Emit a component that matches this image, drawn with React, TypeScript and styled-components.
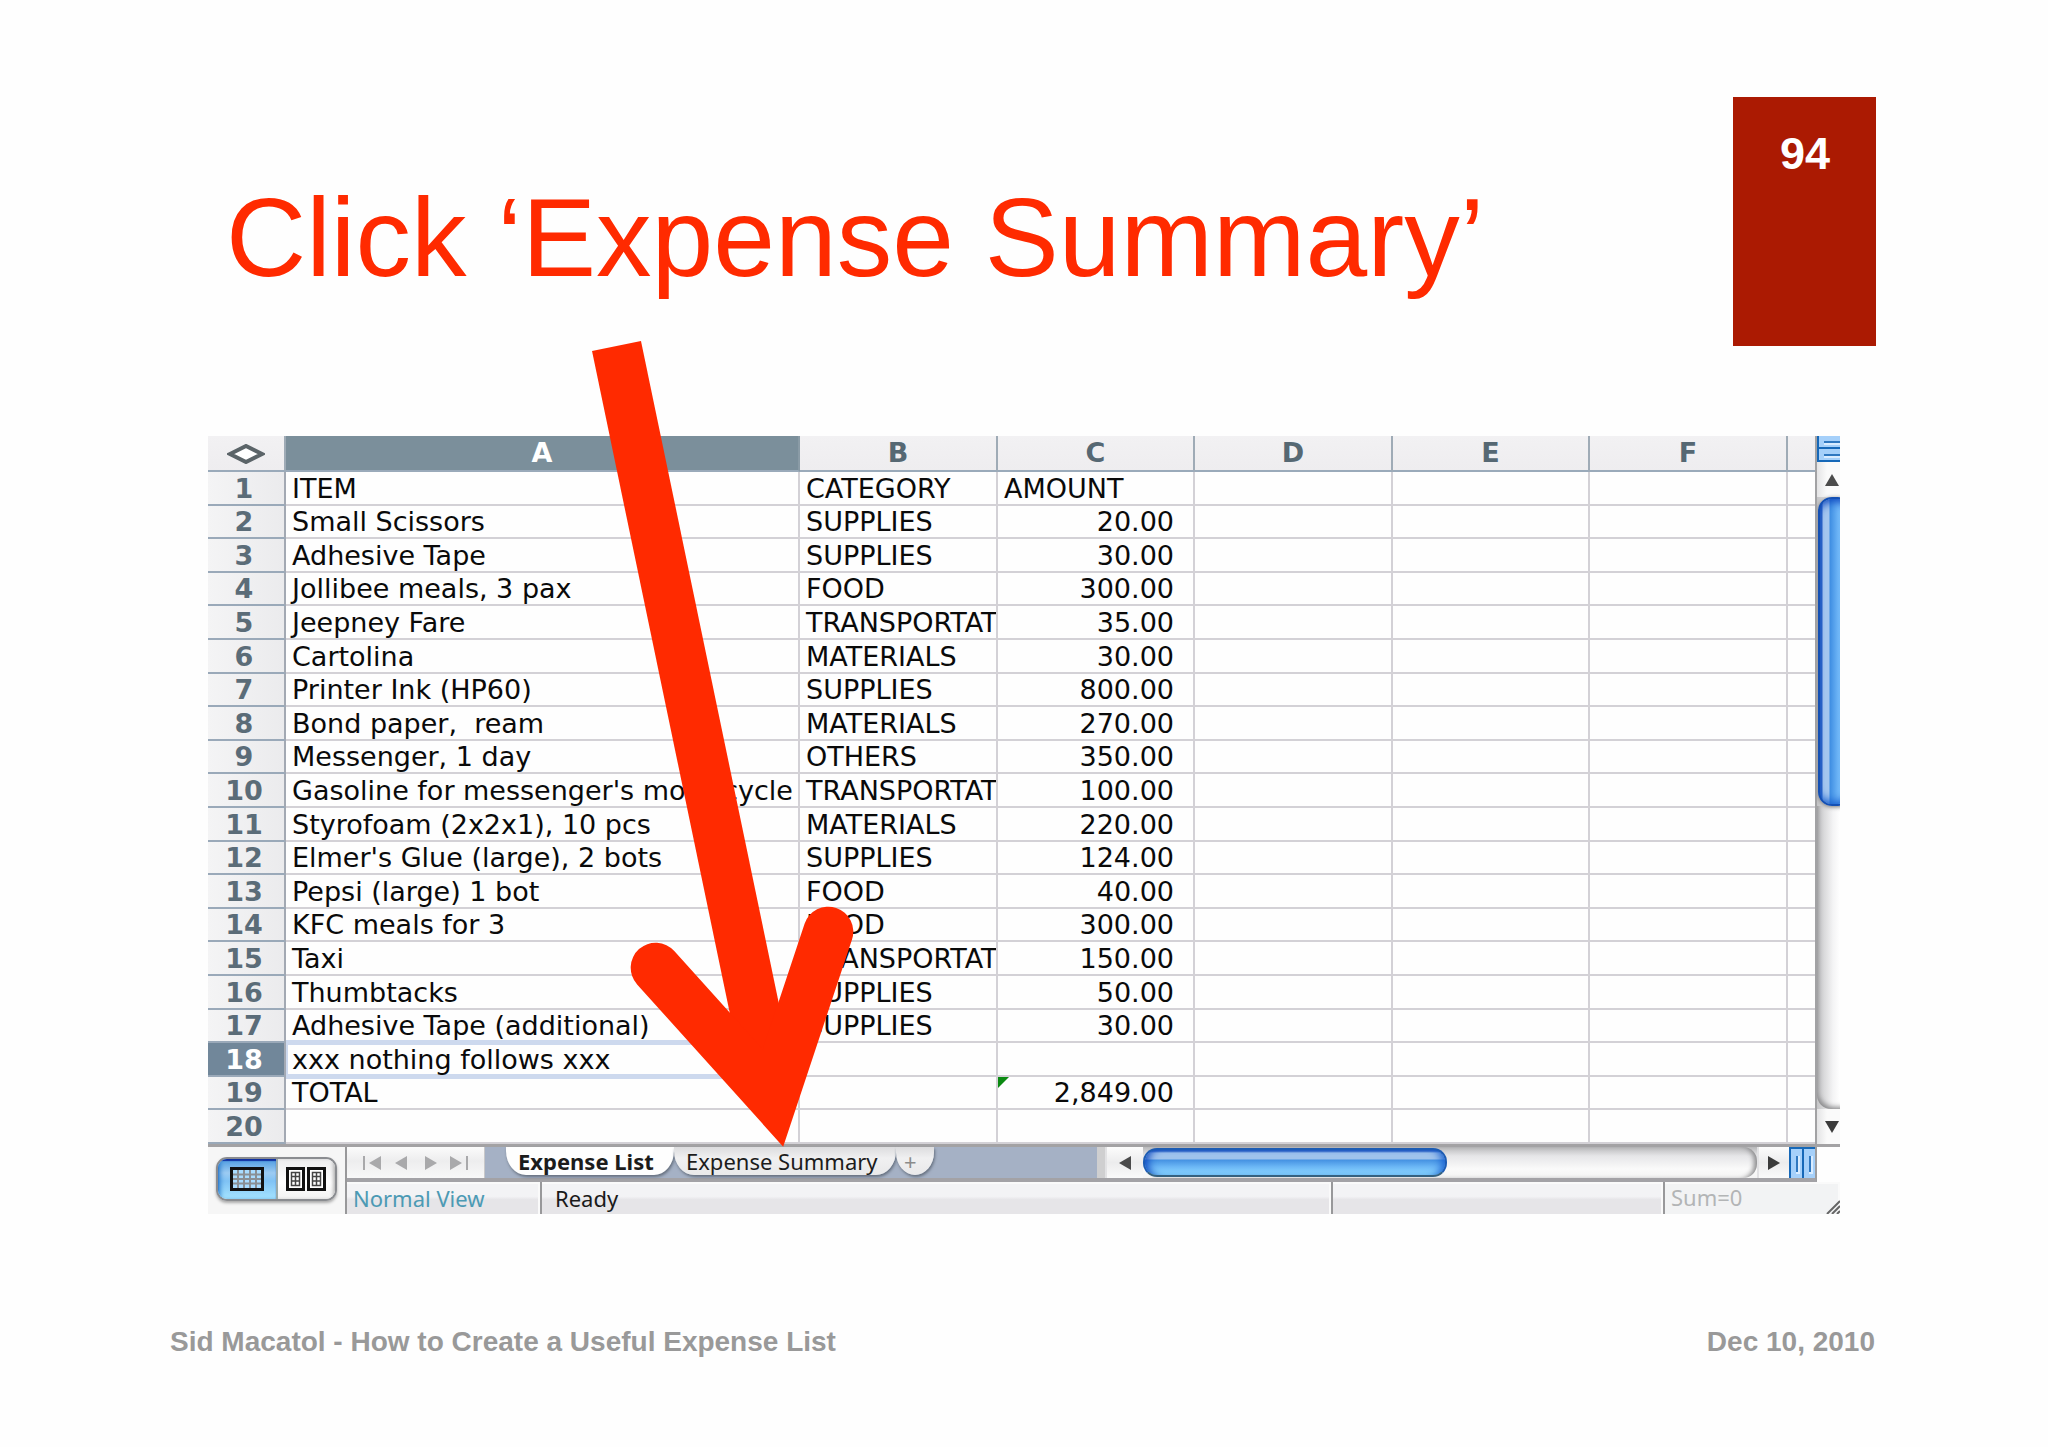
import React, { useState } from "react";
import styled, { createGlobalStyle, css } from "styled-components";

const GlobalStyle = createGlobalStyle`
  * { box-sizing: border-box; }
  body { margin: 0; background: #fefefe; }
  button { font: inherit; color: inherit; }
`;

const Slide = styled.main`
  padding-top: 97px;
  padding-bottom: 80px;
  background: #fefefe;
  font-family: "Liberation Sans", Arial, sans-serif;
`;

const Header = styled.header`
  display: flex;
  justify-content: space-between;
  align-items: flex-start;
  padding: 0 172px 0 226px;
`;

const Title = styled.h1`
  margin: 0;
  padding-top: 79px;
  font-size: 111px;
  line-height: 124px;
  font-weight: 400;
  color: #ff2a00;
`;

const PageBadge = styled.div`
  width: 143px;
  height: 249px;
  padding: 31px 46px;
  background: #ab1a02;
  color: #fff;
  font-size: 45px;
  line-height: 52px;
  font-weight: 700;
  text-align: right;
`;

const Sheet = styled.section`
  position: relative;
  margin: 90px 208px 0;
  font-family: "DejaVu Sans", Verdana, sans-serif;
`;

const GridArea = styled.div`
  display: flex;
`;

const Table = styled.table`
  flex: 1;
  width: 0;
  table-layout: fixed;
  border-collapse: separate;
  border-spacing: 0;
  font-size: 27px;
  line-height: 31px;
  color: #0a0a0a;
`;

const Col = styled.col<{ $w?: number }>`
  ${(p) => p.$w && `width: ${p.$w}px;`}
`;

const HeadRow = styled.tr`
  height: 36px;
`;

const Row = styled.tr`
  height: 34px;
  &:nth-child(5n + 2),
  &:nth-child(5n + 4) {
    height: 33px;
  }
`;

const ColHead = styled.th<{ $active?: boolean }>`
  padding: 0;
  line-height: 34px;
  vertical-align: top;
  color: ${(p) => (p.$active ? "#fff" : "#566873")};
  background: ${(p) => (p.$active ? "#7b8f9b" : "linear-gradient(#f2f1f3, #eeedef)")};
  border-right: 2px solid ${(p) => (p.$active ? "#8a9ba6" : "#9fabb6")};
  border-bottom: 2px solid #9aaaba;
  svg { display: block; margin: 8px auto 0; }
  &:last-child { border-right: 0; }
`;

const RowHead = styled.th<{ $active?: boolean }>`
  padding: 0 4px 0 0;
  color: ${(p) => (p.$active ? "#fff" : "#5b6c78")};
  background: ${(p) => (p.$active ? "#71879a" : "linear-gradient(90deg, #f4f4f5, #ebebed)")};
  border-right: 2px solid #a3a9b3;
  border-bottom: 2px solid #9aa9b9;
`;

const selection = css`
  position: relative;
  isolation: isolate;
  &::after {
    content: "";
    position: absolute;
    z-index: -1;
    inset: -3px -4px -4px 0;
    border: 5px solid #cdd9ee;
    border-left-width: 2px;
  }
`;

const flag = css`
  position: relative;
  &::before {
    content: "";
    position: absolute;
    top: 0;
    left: 0;
    border-top: 11px solid #0b8a12;
    border-right: 11px solid transparent;
  }
`;

const Cell = styled.td<{ $num?: boolean; $selected?: boolean; $flag?: boolean }>`
  padding: 0 ${(p) => (p.$num ? 19 : 0)}px 0 6px;
  text-align: ${(p) => (p.$num ? "right" : "left")};
  white-space: pre;
  overflow: ${(p) => (p.$selected ? "visible" : "hidden")};
  border-right: 2px solid #d3d1d6;
  border-bottom: 2px solid #d3d1d6;
  background: #fefefe;
  ${(p) => p.$selected && selection}
  ${(p) => p.$flag && flag}
  &:last-child { border-right: 0; }
`;

const VScroll = styled.div`
  width: 25px;
  overflow: hidden;
  display: flex;
  flex-direction: column;
  border-left: 2px solid #a2a2a4;
  background: linear-gradient(90deg, #c4c4c6, #f4f4f5 16px, #fff);
`;

const Splitter = styled.button<{ $vertical?: boolean }>`
  display: flex;
  flex-direction: ${(p) => (p.$vertical ? "row" : "column")};
  flex: none;
  width: ${(p) => (p.$vertical ? "26px" : "36px")};
  height: ${(p) => (p.$vertical ? "31px" : "26px")};
  padding: 0;
  border: 0;
`;

const SplitHalf = styled.span<{ $vertical?: boolean }>`
  flex: 1;
  display: flex;
  align-items: center;
  justify-content: center;
  background: #a5d0fa;
  border: 2px solid #1668b8;
  border-width: ${(p) => (p.$vertical ? "2px 0 0 2px" : "0 0 2px 2px")};
  &::before {
    content: "";
    width: ${(p) => (p.$vertical ? 2 : 24)}px;
    height: ${(p) => (p.$vertical ? 16 : 2)}px;
    background: #2f78c0;
    box-shadow: 1px 1px 0 1px #d9ecff;
  }
`;

const VArrow = styled.button`
  flex: none;
  width: 23px;
  height: 35px;
  padding: 0 0 0 8px;
  border: 0;
  background: linear-gradient(90deg, #e4e4e5, #fafafa 10px);
  text-align: left;
  svg { display: block; }
`;

const VThumb = styled.div`
  flex: none;
  width: 34px;
  height: 309px;
  margin-left: 1px;
  border-radius: 14px;
  border: 2px solid #1450b4;
  background: linear-gradient(90deg, #2b62c4 0 2px, #a4c6ee 3px 9px, #3f8ee2 10px, #6cb4f6 18px, #8fd0ff);
  box-shadow: inset 0 8px 8px -5px #0f49c0, inset 0 -8px 8px -5px #1b62d0, 0 1px 4px #777;
`;

const VTrack = styled.div`
  flex: 1;
  width: 34px;
  border-bottom-left-radius: 14px;
  box-shadow: inset 3px -4px 5px -2px #8b8b8d;
`;

const Bottom = styled.div`
  display: flex;
  border-top: 3px solid #a3a2a4;
`;

const ViewPanel = styled.div`
  width: 139px;
  padding: 10px 0 0 8px;
  background: #f6f6f6;
  border-right: 2px solid #98989a;
`;

const ViewSwitch = styled.div`
  display: flex;
  width: 121px;
  height: 44px;
  border: 2px solid #8a8c90;
  border-radius: 11px;
  overflow: hidden;
  box-shadow: 0 2px 3px #aaa;
`;

const ViewButton = styled.button<{ $on?: boolean }>`
  flex: 1;
  display: flex;
  align-items: center;
  justify-content: center;
  padding: 0;
  border: 0;
  border-right: ${(p) => (p.$on ? "2px solid #9aa" : "0")};
  background: ${(p) =>
    p.$on ? "linear-gradient(#4c9ae0, #9ccbf2 35%, #7fc2f4 55%, #a6e4ff)" : "linear-gradient(#ededee, #fff 60%, #f2f2f2)"};
  box-shadow: ${(p) => (p.$on ? "inset 0 2px 1px #1030a0, inset 4px 0 5px -2px #2476c8" : "inset -3px 0 4px -2px #999")};
`;

const BottomMain = styled.div`
  flex: 1;
  min-width: 0;
`;

const TabBar = styled.div`
  display: flex;
  height: 35px;
  margin-right: 23px;
  border-right: 2px solid #9c9c9e;
  border-bottom: 4px solid #a3a2a6;
  background: #a5b1c5;
`;

const NavGroup = styled.div`
  display: flex;
  width: 138px;
  padding: 0 10px;
  justify-content: space-between;
  background: linear-gradient(#fbfbfb, #ededee 45%, #f8f8f8);
  border-right: 1px solid #c8c8ca;
`;

const IconButton = styled.button`
  padding: 0;
  border: 0;
  width: 30px;
  background: none;
  display: flex;
  align-items: center;
  justify-content: center;
`;

const TabList = styled.div`
  display: flex;
  flex: 1;
  height: 28px;
  padding-left: 21px;
  font-family: "Noto Sans", "Open Sans", sans-serif;
  font-size: 22px;
  line-height: 26px;
`;

const Tab = styled.button<{ $on?: boolean; $w: number }>`
  width: ${(p) => p.$w}px;
  padding: 0 0 0 12px;
  border: 0;
  border-radius: 0 0 20px 20px / 0 0 24px 24px;
  font-weight: ${(p) => (p.$on ? 700 : 400)};
  color: #1c1c1c;
  text-align: left;
  white-space: nowrap;
  background: ${(p) => (p.$on ? "#fefefe" : "linear-gradient(#dcdcde, #f0f0f1 40%, #e9e9ea)")};
  box-shadow: 1px 2px 3px #66707f;
`;

const AddTab = styled(Tab)`
  padding-left: 8px;
  color: #8b8b8b;
`;

const HScroll = styled.div`
  display: flex;
  width: 718px;
  border-left: 8px solid #cfcfd0;
  box-shadow: inset 2px 0 0 #fff, inset 4px 0 0 #aaa;
  background: linear-gradient(#b9b9bb, #e6e6e8 9px, #fafafa 22px, #f4f4f4);
`;

const HArrow = styled.button<{ $w: number }>`
  width: ${(p) => p.$w}px;
  padding: 0;
  border: 0;
  border-left: 2px solid #e2e2e4;
  background: linear-gradient(#fcfcfc, #ececed 50%, #fafafa);
  display: flex;
  align-items: center;
  justify-content: center;
`;

const HTrack = styled.div`
  flex: 1;
  border-radius: 14px;
  box-shadow: inset -5px 0 5px -2px #8b8b8d;
`;

const HThumb = styled.div`
  width: 304px;
  height: 29px;
  margin-top: 1px;
  border-radius: 14px;
  border: 2px solid #1d5cb4;
  border-bottom-color: #35617f;
  background: linear-gradient(#2b62c4 0 1px, #9fc3ec 3px 9px, #4592e2 10px, #6db8f6 17px, #8edcff);
  box-shadow: inset 8px 0 8px -5px #0f49c0, inset -8px 0 8px -5px #1b62d0;
`;

const StatusBar = styled.div`
  display: flex;
  height: 32px;
  font-family: "Noto Sans", "Open Sans", sans-serif;
  font-size: 22px;
  line-height: 33px;
  background: linear-gradient(#f3f3f5 0 45%, #e6e5e8 55%);
`;

const StatusCell = styled.div<{ $w?: number; $color?: string; $pad?: number }>`
  ${(p) => (p.$w ? `width: ${p.$w}px;` : "flex: 1;")}
  padding-left: ${(p) => p.$pad ?? 6}px;
  color: ${(p) => p.$color ?? "#1a1a1a"};
  white-space: nowrap;
  border-right: 2px solid #98989a;
  box-shadow: inset -2px 2px 0 #fafafa;
  &:last-child {
    display: flex;
    justify-content: space-between;
    align-items: flex-end;
    border-right: 0;
    background: #f2f3f4;
  }
`;

const ArrowOverlay = styled.svg`
  position: absolute;
  left: 382px;
  top: -96px;
  pointer-events: none;
`;

const Footer = styled.footer`
  display: flex;
  justify-content: space-between;
  padding: 112px 173px 0 170px;
  font-size: 28px;
  line-height: 32px;
  font-weight: 700;
  color: #999;
`;

const columns = [
  { name: "A", width: 514 },
  { name: "B", width: 198 },
  { name: "C", width: 197 },
  { name: "D", width: 198 },
  { name: "E", width: 197 },
  { name: "F", width: 198 },
];

const rows: [string, string, string][] = [
  ["ITEM", "CATEGORY", "AMOUNT"],
  ["Small Scissors", "SUPPLIES", "20.00"],
  ["Adhesive Tape", "SUPPLIES", "30.00"],
  ["Jollibee meals, 3 pax", "FOOD", "300.00"],
  ["Jeepney Fare", "TRANSPORTAT", "35.00"],
  ["Cartolina", "MATERIALS", "30.00"],
  ["Printer Ink (HP60)", "SUPPLIES", "800.00"],
  ["Bond paper,  ream", "MATERIALS", "270.00"],
  ["Messenger, 1 day", "OTHERS", "350.00"],
  ["Gasoline for messenger's motorcycle", "TRANSPORTAT", "100.00"],
  ["Styrofoam (2x2x1), 10 pcs", "MATERIALS", "220.00"],
  ["Elmer's Glue (large), 2 bots", "SUPPLIES", "124.00"],
  ["Pepsi (large) 1 bot", "FOOD", "40.00"],
  ["KFC meals for 3", "FOOD", "300.00"],
  ["Taxi", "TRANSPORTAT", "150.00"],
  ["Thumbtacks", "SUPPLIES", "50.00"],
  ["Adhesive Tape (additional)", "SUPPLIES", "30.00"],
  ["xxx nothing follows xxx", "", ""],
  ["TOTAL", "", "2,849.00"],
  ["", "", ""],
];

const SELECTED_ROW = 17;
const TOTAL_ROW = 18;

const navIcons = [
  { label: "First sheet", d: "M1 0h2v14h-2zM19 0v14l-12 -7z" },
  { label: "Previous sheet", d: "M16 0v14l-12 -7z" },
  { label: "Next sheet", d: "M5 0v14l12 -7z" },
  { label: "Last sheet", d: "M1 0v14l12 -7zM17 0h2v14h-2z" },
];

export default function App() {
  const [tab, setTab] = useState(0);
  return (
    <Slide>
      <GlobalStyle />
      <Header>
        <Title>Click ‘Expense Summary’</Title>
        <PageBadge>94</PageBadge>
      </Header>

      <Sheet>
        <GridArea>
          <Table>
            <colgroup>
              <Col $w={78} />
              {columns.map((c) => (
                <Col key={c.name} $w={c.width} />
              ))}
              <Col />
            </colgroup>
            <thead>
              <HeadRow>
                <ColHead aria-label="Select all">
                  <svg width="38" height="20" viewBox="0 0 38 20">
                    <path d="M3 10L19 2L35 10L19 18Z" fill="#fff" stroke="#5b6468" strokeWidth="4" />
                  </svg>
                </ColHead>
                {columns.map((c, i) => (
                  <ColHead key={c.name} scope="col" $active={i === 0}>
                    {c.name}
                  </ColHead>
                ))}
                <ColHead />
              </HeadRow>
            </thead>
            <tbody>
              {rows.map(([item, category, amount], i) => (
                <Row key={i}>
                  <RowHead scope="row" $active={i === SELECTED_ROW}>
                    {i + 1}
                  </RowHead>
                  <Cell $selected={i === SELECTED_ROW}>{item}</Cell>
                  <Cell>{category}</Cell>
                  <Cell $num={i > 0} $flag={i === TOTAL_ROW}>
                    {amount}
                  </Cell>
                  <Cell />
                  <Cell />
                  <Cell />
                  <Cell />
                </Row>
              ))}
            </tbody>
          </Table>
          <VScroll>
            <Splitter aria-label="Split rows">
              <SplitHalf />
              <SplitHalf />
            </Splitter>
            <VArrow aria-label="Scroll up">
              <svg width="14" height="12" viewBox="0 0 14 12">
                <path d="M0 12L7 0L14 12Z" fill="#4b4b4b" />
              </svg>
            </VArrow>
            <VThumb />
            <VTrack />
            <VArrow aria-label="Scroll down">
              <svg width="14" height="12" viewBox="0 0 14 12">
                <path d="M0 0L7 12L14 0Z" fill="#3b3b3b" />
              </svg>
            </VArrow>
          </VScroll>
        </GridArea>

        <Bottom>
          <ViewPanel>
            <ViewSwitch>
              <ViewButton $on aria-label="Normal view">
                <svg width="34" height="24" viewBox="0 0 34 24">
                  <rect x="1.5" y="1.5" width="31" height="21" fill="#a9dcff" stroke="#111" strokeWidth="3" />
                  <path d="M3 7.5H31M3 12H31M3 16.5H31M8 3V21M14 3V21M20 3V21M26 3V21" stroke="#8a8f94" strokeWidth="2" />
                </svg>
              </ViewButton>
              <ViewButton aria-label="Page layout view">
                <svg width="40" height="24" viewBox="0 0 40 24">
                  {[0, 21].map((x) => (
                    <g key={x} transform={`translate(${x} 0)`}>
                      <rect x="1.5" y="1.5" width="16" height="21" fill="#fff" stroke="#111" strokeWidth="3" />
                      <path d="M5.5 5.5h8v13h-8zM5.5 9.5h8M5.5 14h8M9.5 5.5v13" fill="none" stroke="#444" strokeWidth="1.5" />
                    </g>
                  ))}
                </svg>
              </ViewButton>
            </ViewSwitch>
          </ViewPanel>
          <BottomMain>
            <TabBar>
              <NavGroup>
                {navIcons.map((n) => (
                  <IconButton key={n.label} aria-label={n.label}>
                    <svg width="20" height="14" viewBox="0 0 20 14">
                      <path d={n.d} fill="#a9a9ab" />
                    </svg>
                  </IconButton>
                ))}
              </NavGroup>
              <TabList role="tablist">
                <Tab role="tab" $w={168} $on={tab === 0} onClick={() => setTab(0)}>
                  Expense List
                </Tab>
                <Tab role="tab" $w={222} $on={tab === 1} onClick={() => setTab(1)}>
                  Expense Summary
                </Tab>
                <AddTab $w={38} aria-label="Add sheet">
                  +
                </AddTab>
              </TabList>
              <HScroll>
                <HArrow $w={38} aria-label="Scroll left">
                  <svg width="12" height="14" viewBox="0 0 12 14">
                    <path d="M12 0V14L0 7Z" fill="#4b4b4b" />
                  </svg>
                </HArrow>
                <HTrack>
                  <HThumb />
                </HTrack>
                <HArrow $w={32} aria-label="Scroll right">
                  <svg width="12" height="14" viewBox="0 0 12 14">
                    <path d="M0 0V14L12 7Z" fill="#3b3b3b" />
                  </svg>
                </HArrow>
                <Splitter $vertical aria-label="Split columns">
                  <SplitHalf $vertical />
                  <SplitHalf $vertical />
                </Splitter>
              </HScroll>
            </TabBar>
            <StatusBar>
              <StatusCell $w={195} $color="#4c9ab4">
                Normal View
              </StatusCell>
              <StatusCell $pad={13}>Ready</StatusCell>
              <StatusCell $w={332} />
              <StatusCell $w={175} $color="#b3b5b6">
                Sum=0
                <svg width="14" height="14" viewBox="0 0 14 14">
                  <path d="M1 14L14 1M6 14L14 6M11 14L14 11" stroke="#666" strokeWidth="2" />
                </svg>
              </StatusCell>
            </StatusBar>
          </BottomMain>
        </Bottom>

        <ArrowOverlay width="266" height="812" viewBox="0 0 266 812" fill="none" stroke="#ff2a00" strokeWidth="50">
          <path d="M26.5 6L183 758" />
          <path d="M65.7 627.7L183 758L238.3 591.7" strokeLinecap="round" />
        </ArrowOverlay>
      </Sheet>

      <Footer>
        <span>Sid Macatol - How to Create a Useful Expense List</span>
        <span>Dec 10, 2010</span>
      </Footer>
    </Slide>
  );
}
